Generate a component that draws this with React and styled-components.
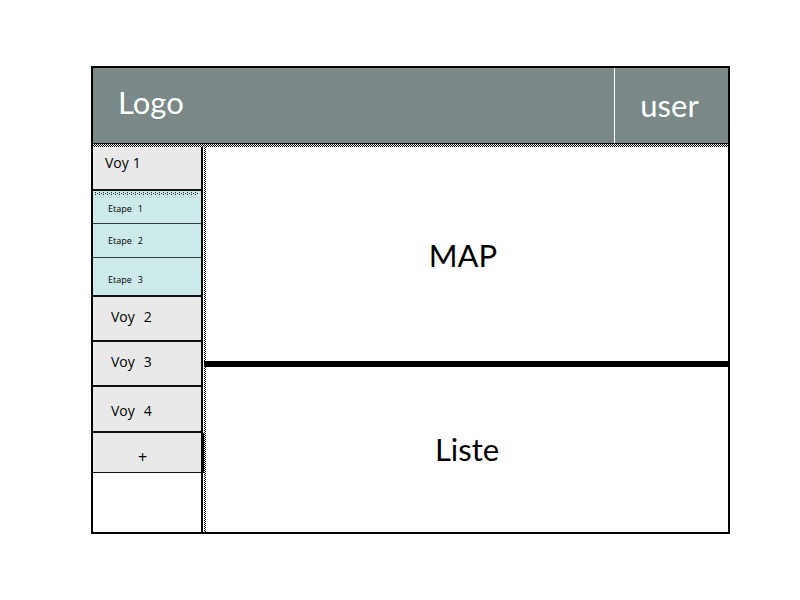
import React from "react";
import styled, { createGlobalStyle, css } from "styled-components";

const GlobalStyle = createGlobalStyle`
  * { box-sizing: border-box; }
  body {
    margin: 0;
    background: #fff;
    color: #000;
    font-family: "Open Sans", "Noto Sans", sans-serif;
  }
  button {
    font: inherit;
    color: inherit;
    border: 0;
    border-radius: 0;
    background: none;
    cursor: pointer;
  }
`;

const largeText = css`
  font-family: Lato, "Open Sans", sans-serif;
  font-size: 31px;
  font-weight: 400;
  line-height: 40px;
`;

const Page = styled.div`
  min-height: 100vh;
  display: flex;
  padding: 66px 70px 66px 91px;
`;

const Frame = styled.div`
  flex: 1;
  display: flex;
  flex-direction: column;
  border: 2px solid #000;
`;

const Header = styled.header`
  display: flex;
  height: 76px;
  background: #7a8987;
  border-bottom: 1px solid #111;
  color: #fff;
`;

const Logo = styled.h1`
  flex: 1;
  margin: 0;
  padding: 14px 25px;
  ${largeText}
`;

const UserButton = styled.button`
  width: 114px;
  padding: 0 4px 2px 0;
  border-left: 1px solid #fff;
  ${largeText}
`;

const DottedRule = styled.div`
  height: 3px;
  background-image: conic-gradient(#000 25%, #fff 0 50%, #000 0 75%, #fff 0);
  background-size: 2px 2px;
`;

const Body = styled.div`
  flex: 1;
  display: flex;
`;

const Sidebar = styled.nav`
  width: 110px;
  border-right: 2px solid #000;
`;

const List = styled.ul`
  margin: 0;
  padding: 0;
  list-style: none;
`;

const TripButton = styled.button`
  display: flex;
  align-items: center;
  gap: ${(p) => (p.$open ? 4 : 9)}px;
  width: 100%;
  height: ${(p) => p.$height}px;
  padding: ${(p) => (p.$open ? "0 12px 10px" : "0 18px 4px")};
  background: #e9e9e9;
  border-bottom: 2px solid #111;
  font-size: 14px;
  line-height: 20px;

  li:last-child > & {
    padding: 4px 18px 0;
  }
`;

const Steps = styled.div`
  padding-top: 1px;
  background: #cdeaea;
  border-bottom: 2px solid #111;
`;

const StepsRule = styled.div`
  height: 3px;
  margin: 0 2px;
  background-image: linear-gradient(90deg, #222 1px, transparent 1px),
    linear-gradient(90deg, #222 1px, transparent 1px),
    linear-gradient(90deg, #222 1px, transparent 1px);
  background-size: 4px 1px;
  background-position: 0 0, 2px 1px, 0 2px;
  background-repeat: repeat-x;
`;

const Step = styled.li`
  & + & {
    border-top: 1px solid #2c3b3b;
  }
`;

const StepButton = styled.button`
  display: flex;
  align-items: center;
  gap: 6px;
  width: 100%;
  height: ${(p) => p.$height}px;
  padding: ${(p) => (p.$last ? "6px 15px 0" : "0 15px")};
  font-size: 9px;
  line-height: 12px;
`;

const AddButton = styled.button`
  display: block;
  width: 100%;
  height: 40px;
  padding: 8px 9px 0 0;
  background: #e9e9e9;
  border-bottom: 1px solid #111;
  box-shadow: 3px 0 0 #000;
  font-size: 16px;
  line-height: 20px;
`;

const Content = styled.main`
  flex: 1;
  display: flex;
  flex-direction: column;
  margin-left: 1px;
`;

const Panel = styled.section`
  flex: ${(p) => p.$grow} 1 0;
  display: flex;
  align-items: center;
  justify-content: center;
  padding: 2px 6px 0 0;
  background-image: linear-gradient(#fff, #fff),
    conic-gradient(#000 25%, #fff 0 50%, #000 0 75%, #fff 0);
  background-size: 100% 100%, 2px 2px;
  background-position: 2px 0, 0 0;
  background-repeat: no-repeat, repeat-y;

  & + & {
    padding: 0 0 0 2px;
    border-top: 6px solid #000;
  }
`;

const PanelTitle = styled.h2`
  margin: 0;
  ${largeText}
`;

const trips = [
  {
    id: 1,
    height: 44,
    steps: [
      { id: 1, height: 28 },
      { id: 2, height: 33 },
      { id: 3, height: 37 },
    ],
  },
  { id: 2, height: 45 },
  { id: 3, height: 45 },
  { id: 4, height: 46 },
];

export default function App() {
  return (
    <Page>
      <GlobalStyle />
      <Frame>
        <Header>
          <Logo>Logo</Logo>
          <UserButton type="button">user</UserButton>
        </Header>
        <DottedRule />
        <Body>
          <Sidebar aria-label="Voyages">
            <List>
              {trips.map((trip) => (
                <li key={trip.id}>
                  <TripButton type="button" $open={!!trip.steps} $height={trip.height}>
                    <span>Voy</span>
                    <span>{trip.id}</span>
                  </TripButton>
                  {trip.steps && (
                    <Steps>
                      <StepsRule />
                      <List>
                        {trip.steps.map((step, i) => (
                          <Step key={step.id}>
                            <StepButton
                              type="button"
                              $height={step.height}
                              $last={i === trip.steps.length - 1}
                            >
                              <span>Etape</span>
                              <span>{step.id}</span>
                            </StepButton>
                          </Step>
                        ))}
                      </List>
                    </Steps>
                  )}
                </li>
              ))}
            </List>
            <AddButton type="button">+</AddButton>
          </Sidebar>
          <Content>
            <Panel $grow={213}>
              <PanelTitle>MAP</PanelTitle>
            </Panel>
            <Panel $grow={166}>
              <PanelTitle>Liste</PanelTitle>
            </Panel>
          </Content>
        </Body>
      </Frame>
    </Page>
  );
}
